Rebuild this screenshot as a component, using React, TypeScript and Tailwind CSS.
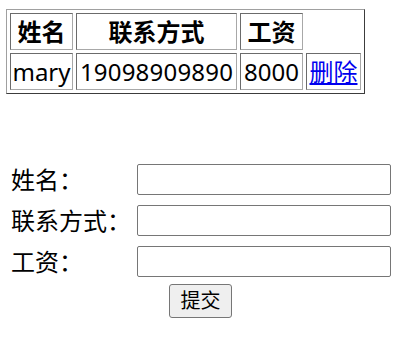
const font = { fontFamily: '"Noto Sans", "Noto Sans CJK SC", sans-serif' };

const cell =
  "border border-t-[#6b6b6b] border-l-[#6b6b6b] border-r-[#a8a8a8] border-b-[#a8a8a8] p-0 text-center align-middle leading-none";

const fields = ["姓名：", "联系方式：", "工资："];

export default function App() {
  return (
    <div className="min-h-screen bg-white text-black text-[24px]" style={font}>
      <div className="pl-[6px] pt-[9px]">
        <table className="border-separate border-spacing-[3px] border border-t-[#a0a0a0] border-l-[#a0a0a0] border-r-[#3c3c3c] border-b-[#3c3c3c]">
          <tbody>
            <tr className="h-[37px]">
              <th className={`${cell} w-[63px] font-bold`}>姓名</th>
              <th className={`${cell} w-[161px] font-bold`}>联系方式</th>
              <th className={`${cell} w-[63px] font-bold`}>工资</th>
            </tr>
            <tr className="h-[37px]">
              <td className={cell}>mary</td>
              <td className={`${cell} tracking-[0.2px]`}>19098909890</td>
              <td className={cell}>8000</td>
              <td className={`${cell} w-[55px]`}>
                <a href="#" className="text-[#0000ee] underline">删除</a>
              </td>
            </tr>
          </tbody>
        </table>
      </div>

      <form className="mt-[69px] pl-[11px] flex flex-col" onSubmit={(e) => e.preventDefault()}>
        <div className="flex flex-col gap-[10px] pt-px">
          {fields.map((f) => (
            <div key={f} className="flex items-center h-[31px]">
              <label className="w-[126px] leading-none">{f}</label>
              <input
                type="text"
                className="w-[254px] h-[31px] border border-[#767676] rounded-[2px] bg-white px-1 text-[16px] outline-none"
              />
            </div>
          ))}
        </div>
        <div className="mt-[7px] pl-[158px] flex">
          <button
            type="submit"
            className="w-[63px] h-[34px] border border-[#767676] rounded-[3px] bg-[#efefef] text-[20px] leading-none"
          >
            提交
          </button>
        </div>
      </form>
    </div>
  );
}
